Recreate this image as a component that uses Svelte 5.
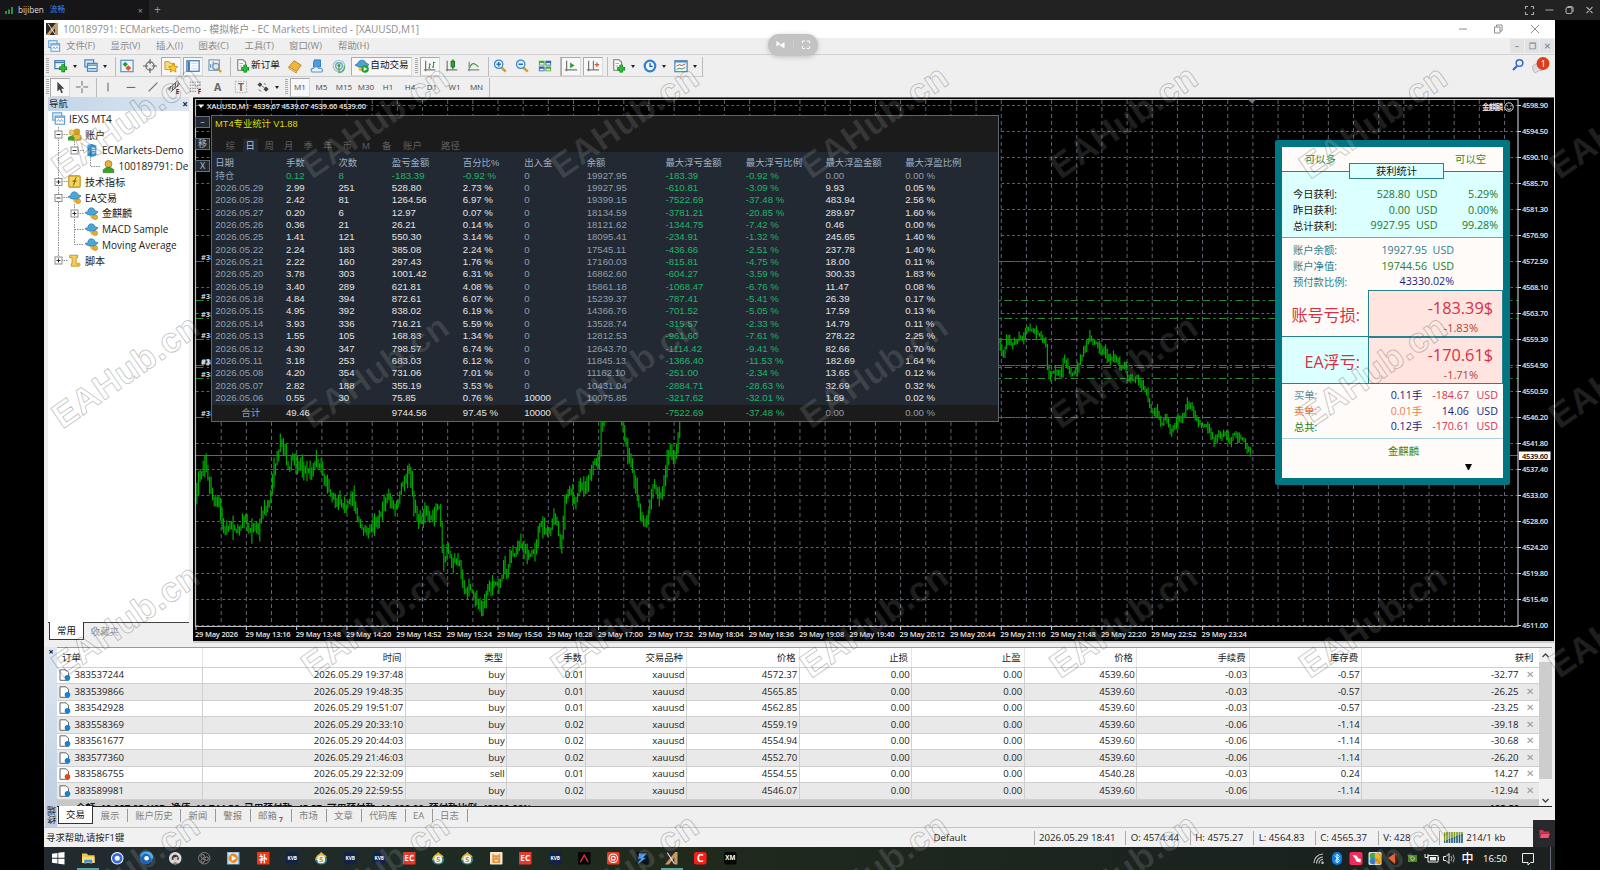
<script lang="ts">
  type Tool = { icon?: string; w: number; label?: string; on?: boolean; drop?: boolean; kind?: string };

  const menus = [['文件(F)', 44.5], ['显示(V)', 45.5], ['插入(I)', 42.5], ['图表(C)', 46], ['工具(T)', 44.5], ['窗口(W)', 49], ['帮助(H)', 50]];

  const mainTools: Tool[] = [
    { kind: 'grip', w: 6 },
    { icon: 'newchart', w: 30, drop: true }, { icon: 'profiles', w: 31, drop: true }, { kind: 'sep', w: 5 },
    { icon: 'market', w: 22 }, { icon: 'target', w: 23 }, { icon: 'navstar', w: 20, on: true }, { kind: 'gap', w: 2 },
    { icon: 'panel', w: 20, on: true }, { icon: 'tester', w: 24 }, { kind: 'sep', w: 4 },
    { icon: 'order', w: 53, label: '新订单' }, { icon: 'book', w: 22 }, { icon: 'cloud', w: 22 }, { icon: 'signal', w: 22 },
    { kind: 'gap', w: 1 }, { icon: 'auto', w: 61, label: '自动交易', on: true }, { kind: 'grip', w: 8 },
    { icon: 'bars', w: 20, on: true }, { icon: 'candles', w: 23 }, { icon: 'line', w: 21 }, { kind: 'sep', w: 5 },
    { icon: 'zoomin', w: 21 }, { icon: 'zoomout', w: 23 }, { icon: 'tile', w: 23 }, { kind: 'sep', w: 5 },
    { icon: 'scroll', w: 20, on: true }, { kind: 'gap', w: 2 }, { icon: 'shift', w: 20, on: true }, { kind: 'sep', w: 5 },
    { icon: 'indicator', w: 31, drop: true }, { icon: 'clock', w: 31, drop: true }, { icon: 'template', w: 30, drop: true },
    { kind: 'sep', w: 3 },
  ];

  const lineTools: Tool[] = [
    { kind: 'grip', w: 6 },
    { icon: 'cursor', w: 20, on: true }, { icon: 'cross', w: 24 }, { kind: 'sep', w: 3 },
    { icon: 'vline', w: 22 }, { icon: 'hline', w: 23 }, { icon: 'trend', w: 21 }, { icon: 'channel', w: 22 },
    { icon: 'fibo', w: 22 }, { icon: 'textA', w: 22 }, { icon: 'textT', w: 23 }, { icon: 'arrows', w: 31, drop: true },
    { kind: 'grip', w: 7 },
    { label: 'M1', w: 20, on: true }, { label: 'M5', w: 23 }, { label: 'M15', w: 22 }, { label: 'M30', w: 22 },
    { label: 'H1', w: 22 }, { label: 'H4', w: 22 }, { label: 'D1', w: 22 }, { label: 'W1', w: 23 }, { label: 'MN', w: 21 },
    { kind: 'sep', w: 3 },
  ];

  const tree = [
    { icon: 'app', text: 'IEXS MT4', pad: 4 },
    { icon: 'users', text: '账户', pad: 20 },
    { icon: 'server', text: 'ECMarkets-Demo', pad: 37 },
    { icon: 'user', text: '100189791: Demo', pad: 53.5 },
    { icon: 'func', text: '技术指标', pad: 20 },
    { icon: 'expert', text: 'EA交易', pad: 20 },
    { icon: 'expert', text: '金麒麟', pad: 37 },
    { icon: 'expert', text: 'MACD Sample', pad: 37 },
    { icon: 'expert', text: 'Moving Average', pad: 37 },
    { icon: 'script', text: '脚本', pad: 20 },
  ];
  const expanders = [[10.5, 23, 0], [26.5, 39, 0], [10.5, 70.5, 1], [10.5, 86.5, 0], [26.5, 102, 1], [10.5, 149, 1]];

  // price scale and grid
  const prices = ['4598.90', '4594.50', '4590.10', '4585.70', '4581.30', '4576.90', '4572.50', '4568.10', '4563.70', '4559.30', '4554.90', '4550.50', '4546.20', '4541.80', '4537.40', '4533.00', '4528.60', '4524.20', '4519.80', '4515.40', '4511.00'];
  const times = ['2026', '13:16', '13:48', '14:20', '14:52', '15:24', '15:56', '16:28', '17:00', '17:32', '18:04', '18:36', '19:08', '19:40', '20:12', '20:44', '21:16', '21:48', '22:20', '22:52', '23:24'];
  const orderLines = [261.5, 300.5, 318.5, 339.5, 365.5, 367.5, 378.5, 417.5];
  const orderTags = [257, 296, 314, 335, 361, 362, 374, 413];
  const gridX = Array.from({ length: 52 }, (_, i) => 221.2 + i * 25.163);

  const leftWave = [16,300,28,215,37,225,46,190,55,245,65,285,75,320,83,295,92,340,98,385,107,400,118,375,135,390,150,390,158,365,168,345,175,395,190,385,203,390,213,345,225,330,240,300,250,210,262,180,270,125,280,140,290,190,298,212,307,160,318,205,330,190,345,205,363,220,378,180,390,205,405,240,420,280,435,300,448,300,462,330,475,305,487,285,500,350,520,395,540,385,550,375,570,345,592,290,605,305,612,330,625,300,635,250,650,240,656,195,664,240,670,320,685,355,695,370,710,320,720,360,735,330,748,320,756,430,762,490,772,450,785,480,800,480,812,500,820,580,835,560,850,580,862,615,878,620,890,580,905,545,920,555,935,535,942,480,948,545,962,450,972,470,985,425,1000,450,1015,470,1030,455,1040,440,1047,370,1060,385,1080,400,1090,340,1100,365,1112,445,1125,300,1137,265,1155,310,1172,250,1187,260,1205,200,1218,170,1226,220,1232,80,1242,50,1265,-40,1290,50,1305,120,1320,180,1335,250,1350,340,1367,380,1380,310,1390,250,1405,290,1418,280,1430,190,1438,150,1450,190,1460,150,1468,60,1472,0];
  const rightWave = [56,125,62,150,70,165,80,120,95,135,110,125,118,110,128,120,138,88,152,90,165,97,180,105,192,125,200,145,204,240,212,215,230,220,242,225,250,175,262,200,275,225,290,210,305,170,318,135,330,110,340,130,350,130,360,155,375,150,388,180,400,170,412,180,420,205,432,200,445,235,460,240,470,230,480,250,495,270,505,300,515,340,530,330,544,380,556,345,570,395,582,380,595,355,610,350,622,310,635,325,650,360,665,378,680,375,690,400,702,422,715,405,735,405,750,425,760,400,775,410,790,420,800,440,812,466];

  function wave(p: number[], ox: number, oy: number, amp: number) {
    let d = '';
    let seed = 7;
    const rnd = () => (seed = (seed * 16807) % 2147483647) / 2147483647;
    let i = 0;
    const at = (x: number) => {
      while (i < p.length - 4 && x > p[i + 2]) i += 2;
      const t = Math.min(1, (x - p[i]) / (p[i + 2] - p[i]));
      return p[i + 1] + (p[i + 3] - p[i + 1]) * t;
    };
    let prev = p[1];
    for (let x = p[0]; x <= p[p.length - 2]; x += 4.718) {
      const y = at(x);
      const hi = Math.min(prev, y) - rnd() * rnd() * amp * 2.2 - 3;
      const lo = Math.max(prev, y) + rnd() * rnd() * amp * 2.2 + 3;
      d += `M${(ox + x / 3).toFixed(1)} ${(oy + hi / 3).toFixed(1)}V${(oy + lo / 3).toFixed(1)}`;
      prev = y;
    }
    return d;
  }
  const candles = wave(leftWave, 190, 400, 18) + wave(rightWave, 980, 300, 10);

  const statTabs = [['综', 20], ['日', 19], ['周', 19.5], ['月', 19.5], ['季', 19.5], ['年', 19.5], ['币', 19.5], ['M', 20], ['备', 21], ['账户', 38], ['路径', 40]];
  const statHead = ['日期', '手数', '次数', '盈亏金额', '百分比%', '出入金', '余额', '最大浮亏金额', '最大浮亏比例', '最大浮盈金额', '最大浮盈比例'];
  const stats = `持仓|0.12|8|-183.39|-0.92 %|0|19927.95|-183.39|-0.92 %|0.00|0.00 %
2026.05.29|2.99|251|528.80|2.73 %|0|19927.95|-610.81|-3.09 %|9.93|0.05 %
2026.05.28|2.42|81|1264.56|6.97 %|0|19399.15|-7522.69|-37.48 %|483.94|2.56 %
2026.05.27|0.20|6|12.97|0.07 %|0|18134.59|-3781.21|-20.85 %|289.97|1.60 %
2026.05.26|0.36|21|26.21|0.14 %|0|18121.62|-1344.75|-7.42 %|0.46|0.00 %
2026.05.25|1.41|121|550.30|3.14 %|0|18095.41|-234.91|-1.32 %|245.65|1.40 %
2026.05.22|2.24|183|385.08|2.24 %|0|17545.11|-436.66|-2.51 %|237.78|1.40 %
2026.05.21|2.22|160|297.43|1.76 %|0|17160.03|-815.81|-4.75 %|18.00|0.11 %
2026.05.20|3.78|303|1001.42|6.31 %|0|16862.60|-604.27|-3.59 %|300.33|1.83 %
2026.05.19|3.40|289|621.81|4.08 %|0|15861.18|-1068.47|-6.76 %|11.47|0.08 %
2026.05.18|4.84|394|872.61|6.07 %|0|15239.37|-787.41|-5.41 %|26.39|0.17 %
2026.05.15|4.95|392|838.02|6.19 %|0|14366.76|-701.52|-5.05 %|17.59|0.13 %
2026.05.14|3.93|336|716.21|5.59 %|0|13528.74|-315.57|-2.33 %|14.79|0.11 %
2026.05.13|1.55|105|168.83|1.34 %|0|12812.53|-961.60|-7.61 %|278.22|2.25 %
2026.05.12|4.30|347|798.57|6.74 %|0|12643.70|-1114.42|-9.41 %|82.66|0.70 %
2026.05.11|3.18|253|683.03|6.12 %|0|11845.13|-1366.40|-11.53 %|182.69|1.64 %
2026.05.08|4.20|354|731.06|7.01 %|0|11162.10|-251.00|-2.34 %|13.65|0.12 %
2026.05.07|2.82|188|355.19|3.53 %|0|10431.04|-2884.71|-28.63 %|32.69|0.32 %
2026.05.06|0.55|30|75.85|0.76 %|10000|10075.85|-3217.62|-32.01 %|1.69|0.02 %`.split('\n').map((r) => r.split('|'));
  const statTotal = ['合计', '49.46', '', '9744.56', '97.45 %', '10000', '', '-7522.69', '-37.48 %', '0.00', '0.00 %'];

  function tone(v: string, col: number, row: number) {
    if (v.startsWith('-') || (row === 0 && (col === 1 || col === 2))) return 'neg';
    if (col === 0 || col === 6 || v === '0' || (col > 8 && (row === 0 || row === 99))) return 'dim';
    return '';
  }

  const orderHead = ['订单', '时间', '类型', '手数', '交易品种', '价格', '止损', '止盈', '价格', '手续费', '库存费', '获利'];
  const orders = `383537244|19:37:48|buy|0.01|4572.37|4539.60|-0.03|-0.57|-32.77
383539866|19:48:35|buy|0.01|4565.85|4539.60|-0.03|-0.57|-26.25
383542928|19:51:07|buy|0.01|4562.85|4539.60|-0.03|-0.57|-23.25
383558369|20:33:10|buy|0.02|4559.19|4539.60|-0.06|-1.14|-39.18
383561677|20:44:03|buy|0.02|4554.94|4539.60|-0.06|-1.14|-30.68
383577360|21:46:03|buy|0.02|4552.70|4539.60|-0.06|-1.14|-26.20
383586755|22:32:09|sell|0.01|4554.55|4540.28|-0.03|0.24|14.27
383589981|22:59:55|buy|0.02|4546.07|4539.60|-0.06|-1.14|-12.94`.split('\n').map((r) => {
    const [id, time, type, lots, open, now, fee, swap, profit] = r.split('|');
    return [id, '2026.05.29 ' + time, type, lots, 'xauusd', open, '0.00', '0.00', now, fee, swap, profit];
  });

  const termTabs = [['展示', 35], ['账户历史', 53], ['新闻', 35], ['警报', 34.5], ['邮箱', 41], ['市场', 35], ['文章', 35], ['代码库', 44], ['EA', 27], ['日志', 35]];
  const status = [['Default', 105.5], ['2026.05.29 18:41', 91.7], ['O: 4574.44', 64.5], ['H: 4575.27', 63.5], ['L: 4564.83', 61.5], ['C: 4565.37', 63], ['V: 428', 61.5]];
  const dock = ['win', 'folder', 'ring', 'edge', 'face', 'obs', 'play', 'zhi', 'kvb', 'bag', 'kvb', 'kvb', 'ec', 'bag', 'bag', 'cat', 'ec', 'kvb', 'peak', 'target2', 'zed', 'mt', 'cc', 'xm'];

  const marks: number[][] = [];
  for (const y of [179, 428.5, 678, 927.5]) for (let c = 0; c < 7; c++) marks.push([62.5 + c * 249.5, y + 1]);
</script>

{#snippet icon(name: string, size = 14)}
  <svg class="ico" width={size} height={size} viewBox="0 0 16 16" fill="none" stroke-width="1.4">
    {#if name === 'newchart'}
      <rect x="1" y="2" width="11" height="9" fill="#e8f2fb" stroke="#3f78ad" /><path d="M1 4h11" stroke="#3f78ad" /><path d="M10.5 6v9M6 10.5h9" stroke="#0b7d14" stroke-width="4" /><path d="M10.5 6.7v7.6M6.7 10.5h7.6" stroke="#25c431" stroke-width="2.4" />
    {:else if name === 'profiles'}
      <rect x="1" y="1" width="10" height="8" fill="#d8eafa" stroke="#4b84b8" /><rect x="4" y="5" width="11" height="9" fill="#eaf4fd" stroke="#4b84b8" /><path d="M4.5 7h10M5 11h9" stroke="#4b84b8" />
    {:else if name === 'market'}
      <rect x="1" y="1.5" width="14" height="13" fill="#eef6fd" stroke="#5f93bf" /><path d="M6 3l3 3-3 3-3-3z" fill="#1fa32a" /><path d="M9.5 7l3.4 3.4-3.4 3.4-3.4-3.4z" fill="#e2562a" />
    {:else if name === 'target'}
      <circle cx="8" cy="8" r="4.7" stroke="#666" /><path d="M8 0v6M8 10v6M0 8h6M10 8h6" stroke="#666" />
    {:else if name === 'navstar'}
      <path d="M1 3h5l1 2h5v7H1z" fill="#f7dc7a" stroke="#c59527" stroke-width="1" /><path d="M10.500 5l1.600 3.400 3.700.4-2.800 2.500.8 3.700-3.300-1.900L7.200 15l.8-3.700-2.800-2.500 3.700-.4z" fill="#ffc928" stroke="#b98512" stroke-width=".8" />
    {:else if name === 'panel'}
      <rect x="1" y="2" width="14" height="12" fill="#fff" stroke="#3e77b5" /><path d="M2 2.800h2.500v10.500H2z" fill="#3e77b5" /><path d="M6 5h7M6 8h7M6 11h7" stroke="#c4d4e6" stroke-width="1" />
    {:else if name === 'tester'}
      <rect x="1" y="1" width="12" height="12" fill="#e9f0f6" stroke="#86a1bb" /><path d="M3 10V6M6 10V3M9 9V5" stroke="#6d8cab" /><circle cx="9" cy="8.500" r="3.500" fill="#d7ebfa" stroke="#7c97ae" /><path d="M11.500 11l3.500 4" stroke="#d59b2e" stroke-width="2.400" />
    {:else if name === 'order' || name === 'indicator'}
      <path d="M2 .8h6l3 3v9H2z" fill="#fff" stroke="#777" stroke-width="1.200" /><path d="M4 5h4M4 8h3" stroke="#999" stroke-width="1" /><path d="M10.500 6.500v9M6 11h9" stroke="#0b7d14" stroke-width="4" /><path d="M10.500 7.200v7.600M6.700 11h7.600" stroke="#25c431" stroke-width="2.400" />
    {:else if name === 'book'}
      <path d="M1 9l6-7 8 5-5.500 7.500z" fill="#f0b73a" stroke="#b57a17" stroke-width="1" /><path d="M1 9v2l8.500 5v-1.800z" fill="#fff2c9" stroke="#b57a17" stroke-width=".8" />
    {:else if name === 'cloud'}
      <path d="M5 1h7v8H4V4z" fill="#4b9ede" stroke="#2c72b3" stroke-width="1" /><path d="M2.500 14.800c-2.500-1.500-1-4.500 1.500-4 1-2.500 5-2.500 6 0 4-1 5.500 2 3.500 4z" fill="#e7f1f9" stroke="#5b94c8" stroke-width="1.200" />
    {:else if name === 'signal'}
      <circle cx="8" cy="8" r="6.500" stroke="#a9c5d8" stroke-width="1.500" /><circle cx="8" cy="8" r="3.800" stroke="#6fa6c6" stroke-width="1.600" /><circle cx="8" cy="7.500" r="1.800" fill="#33a141" /><path d="M8 8v7.500c5 0 7-4 6-8" stroke="#56a866" stroke-width="1.500" />
    {:else if name === 'auto'}
      <path d="M3 8c3 2 7 2 10 0l-2 5-6 1z" fill="#f0c148" /><path d="M0 7c1-1 2-1.500 3-1.500C4 0 12 0 12.500 5c1.500 0 2.500.5 3.500 1.500C12 10 5 10 0 7z" fill="#4ba0d8" stroke="#24699e" stroke-width=".8" /><circle cx="11.500" cy="11.500" r="4.300" fill="#22a52d" /><path d="M10 9.200v4.600l4-2.300z" fill="#fff" />
    {:else if name === 'bars'}
      <path d="M3 2v12M1 12.500h13" stroke="#777" /><path d="M7.500 5v6M12 3v7M6 10h1.500M7.500 6H9M10.500 9H12M12 4h2" stroke="#38923d" stroke-width="1.200" />
    {:else if name === 'candles'}
      <path d="M2.500 2v12M1 12.500h13" stroke="#777" /><path d="M9 .5v11" stroke="#136b18" /><rect x="7" y="2.500" width="4" height="6.500" fill="#2aa833" stroke="#136b18" stroke-width="1" />
    {:else if name === 'line'}
      <path d="M2.500 3v11M1 12.500h13" stroke="#888" /><path d="M3 10c3-7 6-5 10-1" stroke="#3a9a40" />
    {:else if name === 'zoomin' || name === 'zoomout'}
      <path d="M9.500 9.500l5 5" stroke="#d3a029" stroke-width="3" /><circle cx="6.500" cy="6" r="4.800" fill="#dcefff" stroke="#3e84c9" /><path d={name === 'zoomin' ? 'M4 6h5M6.500 3.500v5' : 'M4 6h5'} stroke="#2b6fb8" stroke-width="1.700" />
    {:else if name === 'tile'}
      <path d="M1 2h6.500v5.500H1zM8.500 8.500H15V14H8.500z" fill="#49a531" /><path d="M8.500 2H15v5.500H8.500zM1 8.500h6.500V14H1z" fill="#2c64b8" /><path d="M2 4.500h4.500v2H2zM9.500 4.500H14v2H9.500zM2 11h4.500v2H2zM9.500 11H14v2H9.500z" fill="#e4f0e4" />
    {:else if name === 'scroll' || name === 'shift'}
      <path d="M3 2v12M1 12.500h14" stroke="#777" />
      {#if name === 'scroll'}<path d="M7 4v6.500l5-3.200z" fill="#2b9f35" />{:else}<path d="M8.500 2v10" stroke="#777" /><path d="M10 6.500h5M12.500 4v5" stroke="#d6572d" stroke-width="1.500" />{/if}
    {:else if name === 'clock'}
      <circle cx="8" cy="8" r="7.300" fill="#2f7fd1" /><circle cx="8" cy="8" r="4.800" fill="#eef6fd" /><path d="M8 4.500V8.300h3" stroke="#1d518a" />
    {:else if name === 'template'}
      <rect x="1" y="2" width="14" height="12.500" fill="#f4f9fe" stroke="#4f86bb" /><path d="M1 3h14" stroke="#4f86bb" stroke-width="2" /><path d="M3 8l3-1.500 3 1 4-2" stroke="#c44" stroke-width="1.100" /><path d="M3 12l3-1.500 3 1 4-2" stroke="#393" stroke-width="1.100" />
    {:else if name === 'cursor'}
      <path d="M5 2v11l2.800-2.500L9.500 15l1.800-.8-1.800-4.200h3.500z" fill="#444" />
    {:else if name === 'cross'}
      <path d="M8 1v5.500M8 9.500V15M1 8h5.500M9.500 8H15" stroke="#666" stroke-width="1.100" />
    {:else if name === 'vline'}
      <path d="M8 3v10" stroke="#666" stroke-width="1.200" />
    {:else if name === 'hline'}
      <path d="M3 8.500h10" stroke="#666" stroke-width="1.200" />
    {:else if name === 'trend'}
      <path d="M3 13L13 3" stroke="#666" stroke-width="1.200" />
    {:else if name === 'channel'}
      <path d="M1 11L12 1M4 14L15 4M4 7l-1 5M7 4.500l-1 8M10 3L9 10M13 2l-1 6" stroke="#555" stroke-width="1.100" /><text x="10" y="16" font-size="7" font-weight="bold" fill="#333">E</text>
    {:else if name === 'fibo'}
      <path d="M1 2.500h13M1 6h13M1 9.500h13M1 13h8" stroke="#666" stroke-width="1" stroke-dasharray="1.500 1.200" /><text x="10" y="16" font-size="7" font-weight="bold" fill="#333">F</text>
    {:else if name === 'textA'}
      <text x="3.500" y="12.500" font-size="12" font-weight="bold" fill="#666">A</text>
    {:else if name === 'textT'}
      <rect x="1.500" y="1.500" width="13" height="13" stroke="#999" stroke-width="1" stroke-dasharray="1.500 1.500" /><text x="4.500" y="12.300" font-size="11.500" font-weight="bold" fill="#666">T</text>
    {:else if name === 'arrows'}
      <path d="M4.500 2.500l2.800 2.800-2.800 2.800-2.800-2.800zM11.500 7.500l3 3-3 3-3-3z" fill="#444" /><path d="M7 7l3 2M3 11l3 2M9 4l2 1" stroke="#555" stroke-width="1" />
    {:else if name === 'app'}
      <rect x="1" y="1" width="11" height="9" fill="#e4f1fc" stroke="#5d9dd4" /><rect x="4" y="5" width="11.500" height="10" fill="#fff" stroke="#5d9dd4" /><path d="M4 6.500h11" stroke="#5d9dd4" /><path d="M6 12l2-3 2 3 2-3 2 3" stroke="#5d9dd4" stroke-width="1" />
    {:else if name === 'users'}
      <circle cx="11" cy="4.500" r="4" fill="#d69d2c" /><path d="M5 15V9.500Q11 5.500 16 9.500V15z" fill="#e9bd38" stroke="#8a6611" stroke-width=".7" /><circle cx="4.500" cy="5.500" r="3.200" fill="#f1cd62" stroke="#a97b12" stroke-width=".5" /><path d="M0 15.500v-4q4-4 8 0v4z" fill="#39a133" />
    {:else if name === 'user'}
      <circle cx="8" cy="5" r="4.300" fill="#e8b23b" stroke="#93680e" stroke-width=".8" /><path d="M1.500 15.500V12q6.500-6 13 0v3.500z" fill="#35a52e" stroke="#1c6c18" stroke-width=".8" />
    {:else if name === 'server'}
      <path d="M3 1l6-1 5 2v12l-6 2-5-2z" fill="#2f94d9" /><path d="M7 2v13" stroke="#1c6ba6" stroke-width="1" /><path d="M8.500 5h4M8.500 8h4M8.500 11h4" stroke="#d9effc" />
    {:else if name === 'func'}
      <rect x="1" y="1" width="14" height="14" rx="1.500" fill="#f6d75e" stroke="#b88f1c" /><path d="M6 13c2 0 2-10 4.500-10M5.500 7.500h5" stroke="#6a4e05" stroke-width="1.200" />
    {:else if name === 'expert'}
      <path d="M5 9l2.500 5.500 4-1 2-5z" fill="#f0c148" /><circle cx="12.500" cy="12.500" r="3" fill="#e6b12e" stroke="#a97b12" stroke-width=".7" /><path d="M0 7c4 4 12 4 16-1-1-1-2.500-1-3.500-1C11.500-.5 3-.5 3.500 6 2 6 1 6 0 7z" fill="#4ba6dc" stroke="#2673a8" stroke-width=".8" />
    {:else if name === 'script'}
      <path d="M2 1.500h10v3h-2V12h3v3H4v-3h1V4.500H2z" fill="#f5cf5c" stroke="#b98a1c" stroke-width="1" /><circle cx="13" cy="13" r="2.500" fill="#e6b12e" />
    {:else if name === 'mt'}
      <rect width="16" height="16" fill="#2b2926" /><path d="M0 16L13 0h3v16h-4V7L5 16z" fill="#c29a68" /><path d="M3 1l9 14" stroke="#eee" stroke-width="1.300" />
    {:else if name === 'win'}
      <path d="M0 2.200l7-1V7.500H0zM8 1l8-1v7.500H8zM0 8.500h7v6.300l-7-1zM8 8.500h8V16l-8-1.100z" fill="#fff" />
    {:else if name === 'folder'}
      <path d="M0 2h6l2 2h8v10H0z" fill="#f5c242" /><path d="M0 6h16v8H0z" fill="#fbdc79" /><path d="M3 15v-5h10v5h-3v-2H6v2z" fill="#3a94dd" />
    {:else if name === 'ring'}
      <circle cx="8" cy="8" r="8" fill="#fff" /><circle cx="8" cy="8" r="5" stroke="#3568e8" stroke-width="3.600" />
    {:else if name === 'edge'}
      <circle cx="8" cy="8" r="8" fill="#1766c4" /><path d="M1 6C3-1 15-1 15.500 8" stroke="#37a9ef" stroke-width="3" /><circle cx="8.500" cy="8" r="3" fill="#fff" />
    {:else if name === 'face'}
      <circle cx="8" cy="8" r="8" fill="#d7d9da" /><path d="M3.500 10C2 2 13.500 1 12.500 10z" fill="#38302d" /><path d="M5.500 7c2 0 3-1 5-1 1 4-1 6-2.500 6S5.500 10 5.500 7z" fill="#eac1a6" /><path d="M4 15q4-4 8 0z" fill="#55749a" />
    {:else if name === 'obs'}
      <circle cx="8" cy="8" r="7.300" fill="#222" stroke="#888" stroke-width="1.200" /><circle cx="6" cy="5.500" r="2.300" stroke="#999" stroke-width="1.200" /><circle cx="11" cy="8.500" r="2.300" stroke="#999" stroke-width="1.200" /><circle cx="6" cy="11" r="2.300" stroke="#999" stroke-width="1.200" />
    {:else if name === 'play'}
      <rect width="16" height="16" fill="#89b9dd" /><rect x="2" y="1" width="12" height="14" fill="#e6f0f7" /><circle cx="8" cy="8" r="6" fill="#f08b1c" /><path d="M6 4.500v7L12 8z" fill="#fff" />
    {:else if name === 'bag'}
      <path d="M8 0c2 3 8 5 7.500 10.500C15 14 12 16 8 16S1 14 .5 10.500C0 5 6 3 8 0z" fill="#2b8199" /><path d="M8 0C6 3 0 5 .5 10.500L8 9l7-3C13 3 9.500 2.500 8 0z" fill="#e1b52d" /><circle cx="8" cy="9.500" r="5" fill="#f2f4ee" /><text x="5.400" y="13" font-size="9.500" font-weight="bold" fill="#c89200">5</text>
    {:else if name === 'cat'}
      <rect width="16" height="16" rx="1" fill="#f4e5d4" /><path d="M3 2l3 2h4l3-2v12H3z" fill="#ef9334" /><path d="M6 7v1M10 7v1M6 11h4" stroke="#fff" />
    {:else if name === 'peak'}
      <rect width="16" height="16" fill="#050505" /><path d="M3 13L8 4l5 9" stroke="#e2313a" stroke-width="1.700" />
    {:else if name === 'target2'}
      <rect width="16" height="16" rx="2" fill="#e93a26" /><circle cx="8" cy="8" r="5.500" stroke="#fff" /><circle cx="8" cy="8" r="2.500" stroke="#fff" stroke-width="1.500" />
    {:else if name === 'zed'}
      <rect width="16" height="16" fill="#08101d" /><path d="M4 2h10L9 7.500h4L3 15h-1l4.500-6.500H3z" fill="#4f9fe8" />
    {:else if ['zhi', 'kvb', 'ec', 'cc', 'xm'].includes(name)}
      <rect width="16" height="16" rx={name === 'cc' || name === 'xm' ? 3 : 0.5} fill={{ zhi: '#ee3a12', kvb: '#122347', ec: '#e8392b', cc: '#fb1d18', xm: '#050505' }[name]} />
      <text x="8" y={{ zhi: 12.5, kvb: 10, ec: 12, cc: 13, xm: 10.8 }[name]} text-anchor="middle" font-weight="bold" font-size={{ zhi: 11, kvb: 6.2, ec: 10.5, cc: 14, xm: 8 }[name]} fill="#fff">{{ zhi: '补', kvb: 'KVB', ec: 'EC', cc: 'C', xm: 'XM' }[name]}</text>
    {/if}
  </svg>
{/snippet}

{#snippet tool(t: Tool)}
  <div class="tool {t.kind ?? ''}" class:on={t.on} class:lab={t.label && t.icon} style="width:{t.w}px">
    {#if t.icon}{@render icon(t.icon, 14)}{/if}
    {#if t.label}<span class={t.icon ? 'cn' : 'tf'}>{t.label}</span>{/if}
    {#if t.drop}<i class="drop"></i>{/if}
  </div>
{/snippet}

<div class="page">
  <div class="remote">
    <div class="rtab">
      <svg width="8" height="7" viewBox="0 0 8 7"><path d="M1 4v3M4 2.500V7M7 0v7" stroke="#2fbf4a" stroke-width="1.500" /></svg>
      <span class="name">bijiben</span><span class="flow">流畅</span><span class="x">×</span>
    </div>
    <span class="plus">+</span>
    <svg class="rctl" width="74" height="12" viewBox="0 0 74 12" fill="none" stroke="#aaa" stroke-width="1.100">
      <path d="M2.500 5V2.500H5M8 2.500h2.500V5M10.500 8v2.500H8M5 10.500H2.500V8M22.500 6h8" /><rect x="43" y="3.500" width="6" height="6" rx="1.500" /><path d="M44.500 2.500h3.500q2 0 2 2V8M63.500 3l6 6M69.500 3l-6 6" />
    </svg>
  </div>

  <div class="desk">
    <header class="title">
      {@render icon('mt', 12)}
      <span>100189791: ECMarkets-Demo - 模拟帐户 - EC Markets Limited - [XAUUSD,M1]</span>
      <svg class="wctl" width="84" height="12" viewBox="0 0 84 12" fill="none" stroke="#8d8d8d"><path d="M2 6h8M74 2l8 8M82 2l-8 8" /><path d="M37.500 4h5.500v6h-5.500zM39.500 4V2h5.500v6h-2" /></svg>
    </header>
    <nav class="menu">
      {@render icon('app', 12)}
      {#each menus as [text, w]}<span style="width:{w}px">{text}</span>{/each}
      <div class="mdi"><b>–</b><b>❐</b><b>✕</b></div>
    </nav>
    <div class="bar one">
      {#each mainTools as t}{@render tool(t)}{/each}
      <svg class="find" width="40" height="18" viewBox="0 0 40 18" fill="none">
        <circle cx="8.500" cy="6" r="3.300" stroke="#3565cf" stroke-width="1.500" /><path d="M6 9l-4 4" stroke="#3565cf" stroke-width="2.200" />
        <path d="M22 13q-2-6 4-6l6 6-5 1-3 2z" fill="#ddd" stroke="#bbb" /><circle cx="32" cy="6.500" r="6.500" fill="#e13c18" /><text x="29.500" y="10" font-size="9.500" fill="#fff">1</text>
      </svg>
    </div>
    <div class="bar two">
      {#each lineTools as t}{@render tool(t)}{/each}
    </div>

    <main class="work">
      <aside class="nav">
        <div class="navhead"><span>导航</span><b>×</b></div>
        <div class="tree">
          <svg class="lines" width="60" height="170" viewBox="0 0 60 170" fill="none" stroke="#8c8c8c">
            <path d="M10.500 16v133M10.500 23.500h9M10.500 70.500h9M10.500 86.500h9M10.500 149.500h9M26.500 30v9.500h10M42.500 46v9.500h10M26.500 93v40.500h9M26.500 102.500h9M26.500 118.500h9" stroke-dasharray="1.500 1" />
            {#each expanders as [x, y, plus]}
              <rect x={x - 3.5} y={y - 3} width="7" height="7" fill="#fff" /><path d={`M${x - 2} ${y + 0.5}h4${plus ? `M${x} ${y - 1.5}v4` : ''}`} stroke="#234" />
            {/each}
          </svg>
          {#each tree as n}
            <div class="node" style="padding-left:{n.pad}px">{@render icon(n.icon, 13)}<span>{n.text}</span></div>
          {/each}
        </div>
        <div class="navtabs"><span class="cur">常用</span><span>收藏夹</span></div>
      </aside>

      <section class="chart">
        <svg width="1361" height="546" viewBox="193 97 1361 546" fill="none">
          <g stroke="#5b6671" stroke-width="1">
            {#each prices as _, i}<path d="M196 {105.5 + i * 26}H1518" stroke-dasharray="2.700 2.600" />{/each}
            {#each gridX as x}<path d="M{x} 100V626" stroke-dasharray="4 3" />{/each}
          </g>
          <g stroke="#2c8a35">
            {#each orderLines as y}<path d="M196 {y}H1518" stroke-dasharray="7.500 3.500 2 3.500" />{/each}
          </g>
          <path d="M195 455.500H1518" stroke="#5c6675" />
          <path d={candles} stroke="#00a800" stroke-width="1.200" />
          <path d="M195.500 99.500H1518V626.500H195.500z" stroke="#b9bdc2" stroke-width="1.200" />
          {#each orderTags as y}<text x="201" y={y + 3} class="tiny b">#38</text>{/each}
          <path d="M198 104.500h6l-3 3.500z" fill="#fff" />
          <text x="207" y="109.200" class="tiny b" textLength="159">XAUUSD,M1&#160; 4539.67 4539.67 4539.60 4539.60</text>
          <text x="1482" y="110" class="tiny b" textLength="21">金麒麟</text>
          <circle cx="1509" cy="107" r="4.200" stroke="#ddd" /><path d="M1507 106h.8M1510.300 106h.8M1506.800 108.500q2.200 2 4.400 0" stroke="#ddd" />
          <path d="M1248 99.500h8l-4 4z" fill="#778" />
          {#each prices as p, i}
            <path d="M1518 {105.500 + i * 26}h3" stroke="#ddd" />
            <text x="1522" y={108.2 + i * 26} class="tiny" textLength="26">{p}</text>
          {/each}
          <rect x="1519" y="451.500" width="31.500" height="8.500" fill="#fff" />
          <text x="1522" y="458.600" class="tiny now" textLength="26">4539.60</text>
          {#each times as t, i}
            <path d="M{196 + i * 50.33} 627v3" stroke="#ddd" />
            <text x={195 + i * 50.33} y="637.300" class="tiny" textLength={i ? 45.3 : 43}>29 May {t}</text>
          {/each}
        </svg>

        <div class="side"><b>–</b><b>移</b><b>X</b></div>

        <div class="stats">
          <div class="shead">
            <h1>MT4专业统计 V1.88</h1>
            <div class="stabs">{#each statTabs as [t, w]}<span class:cur={t === '日'} style="width:{w}px">{t}</span>{/each}</div>
          </div>
          <div class="srow heads">{#each statHead as h}<span>{h}</span>{/each}</div>
          {#each stats as row, r}
            <div class="srow">{#each row as v, c}<span class={tone(v, c, r)}>{v}</span>{/each}</div>
          {/each}
          <div class="srow total">{#each statTotal as v, c}<span class={tone(v, c, 99)}>{v}</span>{/each}</div>
        </div>

        <div class="ea">
          <div class="allow"><span>可以多</span><span>可以空</span></div>
          <div class="gain">
            <h2>获利统计</h2>
            <p><em>今日获利:</em><span class="v">528.80</span><span class="u">USD</span><span class="p">5.29%</span></p>
            <p><em>昨日获利:</em><span class="v">0.00</span><span class="u">USD</span><span class="p">0.00%</span></p>
            <p><em>总计获利:</em><span class="v">9927.95</span><span class="u">USD</span><span class="p">99.28%</span></p>
          </div>
          <div class="acct">
            <p><em>账户余额:</em><span>19927.95&#160; USD</span></p>
            <p><em>账户净值:</em><span class="g">19744.56&#160; USD</span></p>
            <p><em>预付款比例:</em><span class="n">43330.02%</span></p>
          </div>
          <div class="loss"><em>账号亏损:</em><div><strong>-183.39$</strong><small>-1.83%</small></div></div>
          <div class="loss c"><em>EA浮亏:</em><div><strong>-170.61$</strong><small>-1.71%</small></div></div>
          <div class="deal">
            <p><em class="t">买单:</em><span class="l n">0.11手</span><span class="a r">-184.67</span><span class="u r">USD</span></p>
            <p><em class="o">卖单:</em><span class="l o">0.01手</span><span class="a n">14.06</span><span class="u n">USD</span></p>
            <p><em class="g">总共:</em><span class="l n">0.12手</span><span class="a r">-170.61</span><span class="u r">USD</span></p>
          </div>
          <div class="brand"><span>金麒麟</span><i></i></div>
        </div>
      </section>
    </main>

    <section class="term">
      <div class="strip"><b>×</b><span>终端</span></div>
      <div class="tbody">
        <div class="tablewrap">
          <div class="table">
            <div class="tr th">{#each orderHead as h}<span>{h}</span>{/each}</div>
            {#each orders as o}
              <div class="tr">
                {#each o as v, c}
                  <span>
                    {#if c === 0}
                      <svg class="doc" width="12" height="12" viewBox="0 0 12 12"><path d="M1 .8h6l2.500 2.500v8H1z" fill="#fff" stroke="#666" /><circle cx="8.500" cy="8.800" r="2.800" fill={o[2] === 'sell' ? '#dd4a1c' : '#1a80cf'} /></svg>
                    {/if}{v}{#if c === 11}<i>✕</i>{/if}
                  </span>
                {/each}
              </div>
            {/each}
            <div class="sum"><span>余额: 19 927.95 USD&#160; 净值: 19 744.56&#160; 已用预付款: 45.57&#160; 可用预付款: 19 698.99&#160; 预付款比例: 43330.02%</span><span>-183.39</span></div>
          </div>
          <div class="sbar">
            <svg width="13" height="14" viewBox="0 0 13 14"><path d="M3.500 9l3-3 3 3" stroke="#444" stroke-width="1.400" fill="none" /></svg>
            <div class="thumb"></div>
            <svg width="13" height="12" viewBox="0 0 13 12"><path d="M3.500 4l3 3 3-3" stroke="#444" stroke-width="1.400" fill="none" /></svg>
          </div>
        </div>
        <div class="ttabs">
          <span class="cur">交易</span>
          {#each termTabs as [t, w]}<span style="width:{w}px">{t}{#if t === '邮箱'}<sub>7</sub>{/if}</span>{/each}
        </div>
      </div>
    </section>

    <footer class="status">
      <span class="help">寻求帮助,请按F1键</span>
      {#each status as [t, w]}<span class="cell" style="width:{w}px">{t}</span>{/each}
      <svg width="19" height="11" viewBox="0 0 19 11"><path d="M.5 0v10M3 0v9M5.500 0v8M8 0v7M10.500 0v6M13 0v5M15.500 0v4M18 0v3" stroke="#7c9a1d" stroke-width="1.600" /><path d="M.5 9v2M3 8v3M5.500 7v4M8 6v5M10.500 5v6M13 4v7M15.500 3v8M18 2v9" stroke="#1c5a84" stroke-width="1.600" /></svg>
      <span class="kb">214/1 kb</span>
      <div class="fold"><svg width="11" height="10" viewBox="0 0 11 10"><path d="M.5 1h3.500l1 1.500h5V4H2.500L.5 8z" fill="#c73a50" /><path d="M2.500 4.500H11L9.500 9H.8z" fill="#f0566b" /></svg></div>
    </footer>

    <div class="taskbar">
      {#each dock as d, i}<div class="app" class:run={i === 1 || i === 21}>{@render icon(d, 12.5)}</div>{/each}
      <svg class="tray" width="245" height="23" viewBox="0 0 245 23" fill="none">
        <g stroke="#ccc" stroke-width="1.100"><path d="M4 16a9 9 0 0 1 9-9M6.500 16.500a6.500 6.500 0 0 1 6.500-6.500M9 16.500a4 4 0 0 1 4-4" /><circle cx="12.500" cy="15.700" r=".7" /></g>
        <rect x="22" y="5" width="10" height="13" rx="5" fill="#0d7de4" /><path d="M25 8.500l4.500 5L27 16V7l2.500 2.500-4.500 5" stroke="#fff" />
        <rect x="39.500" y="5" width="13" height="13" rx="2" fill="#f22c5a" /><path d="M42.500 8l4 .5 2 3 2.500.5-.5 3.500-4-1-1.500-3z" fill="#fff" />
        <rect x="58.500" y="5" width="13" height="13" rx="1.500" fill="#dbe2e8" /><circle cx="63" cy="9" r="3.300" fill="#48a83c" /><circle cx="68" cy="9" r="3.300" fill="#f0b72d" /><circle cx="63" cy="14" r="3.300" fill="#2d83dc" /><circle cx="68" cy="14" r="3.300" fill="#e8a418" />
        <path d="M78 11l7-5v11z" fill="#e2653a" /><path d="M86 7v9" stroke="#8b2b16" />
        <rect x="98" y="8" width="9" height="7" fill="#4d8a24" /><circle cx="102.500" cy="11.500" r="1.800" stroke="#cde" stroke-width=".8" />
        <path d="M118 8.500h10v6.500h-10zM128.500 10v3" stroke="#eee" /><path d="M120 10h6v3.500h-6z" fill="#eee" /><path d="M115 7v3.500h3V7" stroke="#eee" />
        <path d="M133.500 9.500h2.500l3-3v10l-3-3h-2.500z" stroke="#eee" /><path d="M141 9q1.500 2.500 0 5M143 7.500q2.500 4 0 8" stroke="#aaa" />
        <text x="151.500" y="16" font-size="12" font-weight="500" fill="#fff">中</text>
        <text x="173" y="15" font-size="9.500" fill="#fff" textLength="24">16:50</text>
        <path d="M212.500 6.500h11v9h-3l-2.500 2.500v-2.500h-5.500z" stroke="#eee" />
        <path d="M240.500 0v23" stroke="#667" />
      </svg>
    </div>
  </div>

  <div class="pill">
    <svg width="50" height="22" viewBox="0 0 50 22" fill="none"><path d="M8.500 7v5.500l4-2.700zM16.500 8v6.500l-5-3.300z" fill="#fff" /><path d="M25.500 7v8" stroke="#d0d0d0" /><path d="M34.500 9V7h2.500M39 7h2.500v2M41.500 12v2.500H39M37 14.500h-2.500V12" stroke="#fff" /></svg>
  </div>

  <svg class="marks" width="1600" height="870" viewBox="0 0 1600 870">
    {#each marks as [x, y]}<text {x} {y} textLength="170" transform="rotate(-34.8 {x} {y})">EAHub.cn</text>{/each}
  </svg>
</div>

<style>
  :global(body) {
    background: #000;
  }
  .page {
    position: relative;
    width: 1600px;
    height: 870px;
    overflow: hidden;
    background: #000;
    font-family: "Open Sans", "Noto Sans CJK SC", sans-serif;
    font-size: 9.600px;
    color: #222;
    line-height: 1;
    white-space: nowrap;
  }
  .page * {
    box-sizing: border-box;
  }
  .ico {
    flex: none;
    display: block;
    overflow: visible;
  }
  .remote {
    display: flex;
    align-items: center;
    height: 20px;
    background: #222223;
    color: #999;
  }
  .rtab {
    display: flex;
    align-items: center;
    width: 149px;
    height: 20px;
    padding: 0 6px 0 5px;
    background: #161618;
  }
  .name {
    margin-left: 5px;
    color: #ddd;
    font-size: 8.200px;
  }
  .flow {
    margin-left: 6px;
    color: #3d7ff0;
    font-size: 7.600px;
  }
  .x {
    margin-left: auto;
    font-size: 9px;
  }
  .plus {
    margin-left: 5px;
    font-size: 12px;
  }
  .rctl {
    margin-left: auto;
    margin-right: 3px;
  }
  .desk {
    width: 1511px;
    margin-left: 44px;
    background: #efefef;
  }
  .title {
    display: flex;
    align-items: center;
    height: 18px;
    padding: 0 14px 0 2px;
    background: #fff;
    color: #8f8f8f;
    font-size: 10px;
  }
  .title span {
    margin-left: 5px;
  }
  .wctl {
    margin-left: auto;
  }
  .menu {
    display: flex;
    align-items: center;
    height: 17px;
    padding-left: 4px;
    border-bottom: 1px solid #d2d2d2;
    color: #8a8a8a;
    font-size: 9.400px;
  }
  .menu .ico {
    margin-right: 6px;
  }
  .mdi {
    display: flex;
    gap: 1px;
    margin-left: auto;
    margin-right: 1px;
  }
  .mdi b {
    width: 14px;
    height: 14px;
    background: #e2e2e2;
    color: #8593a2;
    font-size: 8px;
    line-height: 14px;
    text-align: center;
  }
  .bar {
    position: relative;
    display: flex;
    align-items: center;
  }
  .one {
    height: 22px;
  }
  .two {
    height: 20px;
  }
  .one::after {
    content: "";
    position: absolute;
    left: 0;
    bottom: 0;
    width: 660px;
    border-bottom: 1px solid #cfcfcf;
  }
  .tool {
    display: flex;
    align-items: center;
    justify-content: center;
    flex: none;
    height: 19px;
    font-size: 8px;
    color: #444;
  }
  .tool.lab {
    padding-left: 1px;
    gap: 1px;
  }
  .tool.on {
    background: #f8f8f8;
    border: 1px solid #d9d9d9;
    border-top-color: #aaa;
    border-left-color: #aaa;
  }
  .tool .cn {
    color: #111;
    font-size: 9.600px;
    margin-top: -2px;
  }
  .tool.sep {
    border-right: 1px solid #bbb;
  }
  .tool.grip::before {
    content: "";
    width: 3px;
    height: 16px;
    background: repeating-linear-gradient(#aaa 0 1px, #efefef 1px 2px);
  }
  .drop {
    margin-left: 5px;
    border: 2.300px solid transparent;
    border-top: 3px solid #222;
    border-bottom: 0;
  }
  .find {
    position: relative;
    margin-left: auto;
    margin-right: 4px;
  }
  .work {
    display: flex;
    height: 546px;
  }
  .nav {
    display: flex;
    flex-direction: column;
    width: 149px;
    padding-left: 4px;
    padding-right: 4px;
  }
  .navhead {
    display: flex;
    align-items: center;
    justify-content: space-between;
    height: 14px;
    padding: 0 1px;
    background: linear-gradient(90deg, #c3d5e8, #dbe6f1);
    color: #222;
    font-size: 9.400px;
  }
  .navhead b {
    font-size: 10px;
  }
  .tree {
    position: relative;
    height: 511px;
    overflow: hidden;
    background: #fff;
  }
  .lines {
    position: absolute;
    left: 0;
    top: 0;
  }
  .node {
    position: relative;
    display: flex;
    align-items: center;
    gap: 4px;
    height: 15.750px;
    color: #222;
    font-size: 10.050px;
  }
  .navtabs {
    display: flex;
    height: 18px;
    border-top: 1px solid #444;
    color: #999;
    font-size: 9.400px;
    line-height: 17px;
  }
  .navtabs span {
    padding: 0 7px;
  }
  .navtabs .cur {
    margin: -1px 0 0 1px;
    border: 1px solid #333;
    border-top: 0;
    background: #fff;
    color: #111;
  }
  .chart {
    position: relative;
    width: 1361px;
    height: 546px;
    background: #000;
    overflow: hidden;
    border-top: 1px solid #666;
    border-bottom: 2px solid #ccc;
  }
  .chart > svg {
    display: block;
    margin-top: -1px;
  }
  .tiny {
    fill: #e8e8e8;
    font-size: 7.500px;
    font-weight: 600;
  }
  .tiny.now {
    fill: #000;
  }
  .side {
    position: absolute;
    left: 2px;
    top: 18px;
    display: flex;
    flex-direction: column;
    gap: 10px;
  }
  .side b {
    width: 15px;
    height: 12px;
    border: 1px solid #66707c;
    background: #222932;
    color: #b8c2cc;
    font-weight: 400;
    font-size: 9px;
    line-height: 10px;
    text-align: center;
  }
  .stats {
    position: absolute;
    left: 17.500px;
    top: 17px;
    width: 788px;
    height: 307px;
    border: 1px solid #5c6672;
    background: #222932;
    color: #e2e4e6;
    font-family: "Liberation Sans", "Noto Sans CJK SC", sans-serif;
    font-size: 9.650px;
  }
  .shead {
    display: flex;
    flex-direction: column;
    justify-content: space-between;
    height: 36px;
    background: #1b1b1b;
  }
  .shead h1 {
    margin: 4px 0 0 3.500px;
    color: #dede00;
    font-size: 9.300px;
    font-weight: 400;
  }
  .stabs {
    display: flex;
    padding-left: 11px;
    color: #5c5f63;
    font-size: 9.400px;
    line-height: 13px;
  }
  .stabs span {
    flex: none;
    padding-left: 3px;
  }
  .stabs .cur {
    background: linear-gradient(90deg, #222932 15px, transparent 15px);
    color: #b4c4d6;
  }
  .srow {
    display: grid;
    grid-template-columns: 70.700px 52.600px 53.400px 71px 61.300px 62.500px 78.800px 80.300px 79.700px 79.700px 1fr;
    align-items: center;
    height: 12.360px;
    padding-left: 3.700px;
  }
  .heads {
    height: 16px;
    padding-top: 5px;
    margin-bottom: 1.200px;
    color: #9fb0c3;
    font-size: 9.400px;
  }
  .total {
    height: 16px;
    margin-top: 1px;
    background: #1b1b1b;
  }
  .total span:first-child {
    padding-left: 26px;
  }
  .neg {
    color: #1fb56a;
  }
  .dim {
    color: #8f9fb0;
  }
  .ea {
    position: absolute;
    left: 1082px;
    top: 42px;
    width: 235px;
    height: 345px;
    border: 7px solid #007682;
    border-radius: 2px;
    background: #fffbf9;
    font-size: 10.700px;
  }
  .ea p {
    display: flex;
    align-items: center;
    height: 15.700px;
    margin: 0;
  }
  .ea em {
    font-style: normal;
    font-size: 10.300px;
  }
  .allow {
    display: flex;
    justify-content: space-between;
    height: 24px;
    padding: 7px 17px 0 23px;
    color: #2b8a2b;
    font-size: 10.300px;
  }
  .gain {
    position: relative;
    height: 66.500px;
    padding: 14.500px 5px 0 11px;
    border-top: 1px solid #26838d;
    border-bottom: 1px solid #6aa9b0;
    background: #dcffff;
    color: #23752c;
  }
  .gain h2 {
    position: absolute;
    left: 67px;
    top: -9px;
    width: 95px;
    height: 16px;
    margin: 0;
    border: 1px solid #26838d;
    background: #dcffff;
    color: #111;
    font-size: 10.300px;
    font-weight: 400;
    line-height: 14px;
    text-align: center;
  }
  .gain em {
    width: 50px;
    color: #151515;
  }
  .gain .v {
    width: 67px;
    text-align: right;
  }
  .gain .u {
    margin-left: 6px;
  }
  .gain .p {
    margin-left: auto;
  }
  .acct {
    height: 52px;
    padding: 5px 49px 0 11px;
    color: #2b7f8e;
  }
  .acct p {
    justify-content: space-between;
  }
  .ea .g {
    color: #23802a;
  }
  .ea .n {
    color: #1b1b84;
  }
  .ea .r {
    color: #d6354a;
  }
  .ea .o {
    color: #f07b4c;
  }
  .ea .t {
    color: #5d9099;
  }
  .loss {
    display: flex;
    height: 47px;
    border-bottom: 1px solid #26838d;
    color: #d92f42;
  }
  .loss.c {
    background: #dcffff;
  }
  .loss em {
    width: 86px;
    padding: 17px 8px 0 0;
    display: flex;
    justify-content: flex-end;
    font-size: 16.100px;
  }
  .loss div {
    display: flex;
    flex-direction: column;
    align-items: flex-end;
    flex: 1;
    padding: 9px 9px 0 0;
    border: 1px solid #26838d;
    border-bottom: 0;
    background: #ffe4e0;
  }
  .loss strong {
    font-size: 16.300px;
    font-weight: 400;
  }
  .loss small {
    margin: 6px 15px 0 0;
    color: #b0433c;
    font-size: 11px;
  }
  .deal {
    height: 55.500px;
    padding: 4px 5px 0 12px;
    border-bottom: 1px solid #a9cfe0;
  }
  .deal em {
    width: 30px;
  }
  .deal .l {
    width: 98.500px;
    text-align: right;
  }
  .deal .a {
    width: 46.500px;
    text-align: right;
  }
  .deal .u {
    margin-left: auto;
  }
  .brand {
    padding-top: 7px;
    color: #2b8a2b;
    font-size: 10.300px;
    text-align: center;
  }
  .brand span {
    margin-left: 22px;
  }
  .brand i {
    display: block;
    width: 7px;
    margin: 8px 0 0 183px;
    border: 3.500px solid transparent;
    border-top: 6px solid #000;
    border-bottom: 0;
  }
  .term {
    display: flex;
    height: 185px;
    padding-top: 4px;
    border-bottom: 1px solid #c4c4c4;
  }
  .strip {
    display: flex;
    flex-direction: column;
    justify-content: space-between;
    align-items: center;
    width: 12px;
    margin-left: 1px;
    padding-bottom: 3px;
    background: linear-gradient(#dfe8f1, #bccde0);
    color: #111;
    font-size: 9px;
  }
  .strip span {
    writing-mode: vertical-rl;
    transform: rotate(180deg);
  }
  .tbody {
    flex: 1;
  }
  .tablewrap {
    display: flex;
    width: 1495px;
    height: 160px;
    border-top: 1px solid #999;
    border-bottom: 1px solid #222;
    background: #fff;
  }
  .table {
    width: 1481.500px;
    overflow: hidden;
  }
  .tr {
    display: grid;
    grid-template-columns: 145.500px 203px 101.500px 79px 101px 112.600px 112.400px 112.600px 112.400px 112.600px 112.500px 1fr;
    height: 16.500px;
    border-bottom: 1px solid #cfcfcf;
    color: #222;
  }
  .tr:nth-child(odd) {
    background: #e9e9e9;
  }
  .tr span {
    display: flex;
    align-items: center;
    justify-content: flex-end;
    padding-right: 1.300px;
    border-right: 1px solid #cfcfcf;
  }
  .tr span:first-child {
    justify-content: flex-start;
    padding-left: 1.500px;
  }
  .tr span:last-child {
    padding-right: 4px;
    border-right: 0;
  }
  .tr i {
    width: 9px;
    margin-left: 7px;
    color: #999;
    font-style: normal;
  }
  .tr.th {
    height: 19.500px;
    background: #fff;
  }
  .th span {
    border-right-color: #e6e6e6;
    font-size: 9.400px;
  }
  .tr.th span {
    padding-right: 3px;
  }
  .tr.th span:first-child {
    padding-left: 5px;
  }
  .tr.th span:last-child {
    padding-right: 5px;
  }
  .doc {
    flex: none;
    margin-right: 4px;
  }
  .sum {
    display: flex;
    justify-content: space-between;
    height: 16px;
    padding: 3px 19px 0 19px;
    background: #c8c8c8;
    color: #111;
    font-weight: 700;
    font-size: 9.600px;
  }
  .sbar {
    width: 13px;
    background: #f1f1f1;
  }
  .sbar svg {
    display: block;
  }
  .thumb {
    height: 117px;
    margin-bottom: 16px;
    background: #cdcdcd;
  }
  .ttabs {
    display: flex;
    height: 18px;
    color: #808080;
    font-size: 9.400px;
  }
  .ttabs span {
    height: 13px;
    margin-top: 2px;
    line-height: 13px;
    text-align: center;
    border-right: 1px solid #999;
  }
  .ttabs .cur {
    width: 35px;
    height: 18px;
    margin: -1px 0 0 1px;
    border: 1px solid #333;
    border-top: 0;
    background: #fff;
    color: #111;
    line-height: 18px;
  }
  .ttabs sub {
    margin-left: 2px;
    color: #e03030;
    font-size: 7px;
    font-weight: 700;
    line-height: 1;
  }
  .status {
    display: flex;
    align-items: center;
    height: 19px;
    padding-left: 2px;
    background: #f1f1f1;
    color: #222;
    font-size: 9.700px;
  }
  .help {
    width: 883px;
    font-size: 9.400px;
  }
  .cell {
    height: 14px;
    padding-left: 4.500px;
    border-right: 1px solid #aaa;
    line-height: 14px;
  }
  .status svg {
    margin-left: 4px;
  }
  .kb {
    margin-left: 3px;
  }
  .fold {
    display: flex;
    align-items: center;
    justify-content: center;
    width: 22px;
    height: 27px;
    margin: -8px 0 0 auto;
    background: #29292d;
  }
  .fold svg {
    margin: 0;
  }
  .taskbar {
    display: flex;
    height: 23px;
    background: linear-gradient(90deg, #222a30, #1e2b23 28%, #202a1c 40%, #1b241f 70%, #1a211f);
  }
  .app {
    display: flex;
    align-items: center;
    justify-content: center;
    width: 29.200px;
    height: 23px;
  }
  .run {
    background: linear-gradient(#59a7a0, #59a7a0) center bottom / 22px 2px no-repeat;
  }
  .tray {
    margin-left: auto;
    margin-right: 0;
  }
  .pill {
    position: absolute;
    left: 768px;
    top: 34px;
    width: 50px;
    height: 22px;
    border-radius: 11px;
    background: #c3c3c3;
    box-shadow: 0 1px 5px rgba(0, 0, 0, 0.200);
  }
  .marks {
    position: absolute;
    left: 0;
    top: 0;
    pointer-events: none;
  }
  .marks text {
    font-family: "Liberation Sans", Arial, sans-serif;
    font-size: 35px;
    font-weight: 700;
    fill: rgba(255, 255, 255, 0.120);
    stroke: rgba(30, 30, 30, 0.260);
    stroke-width: 1;
    stroke-linejoin: round;
  }
</style>
